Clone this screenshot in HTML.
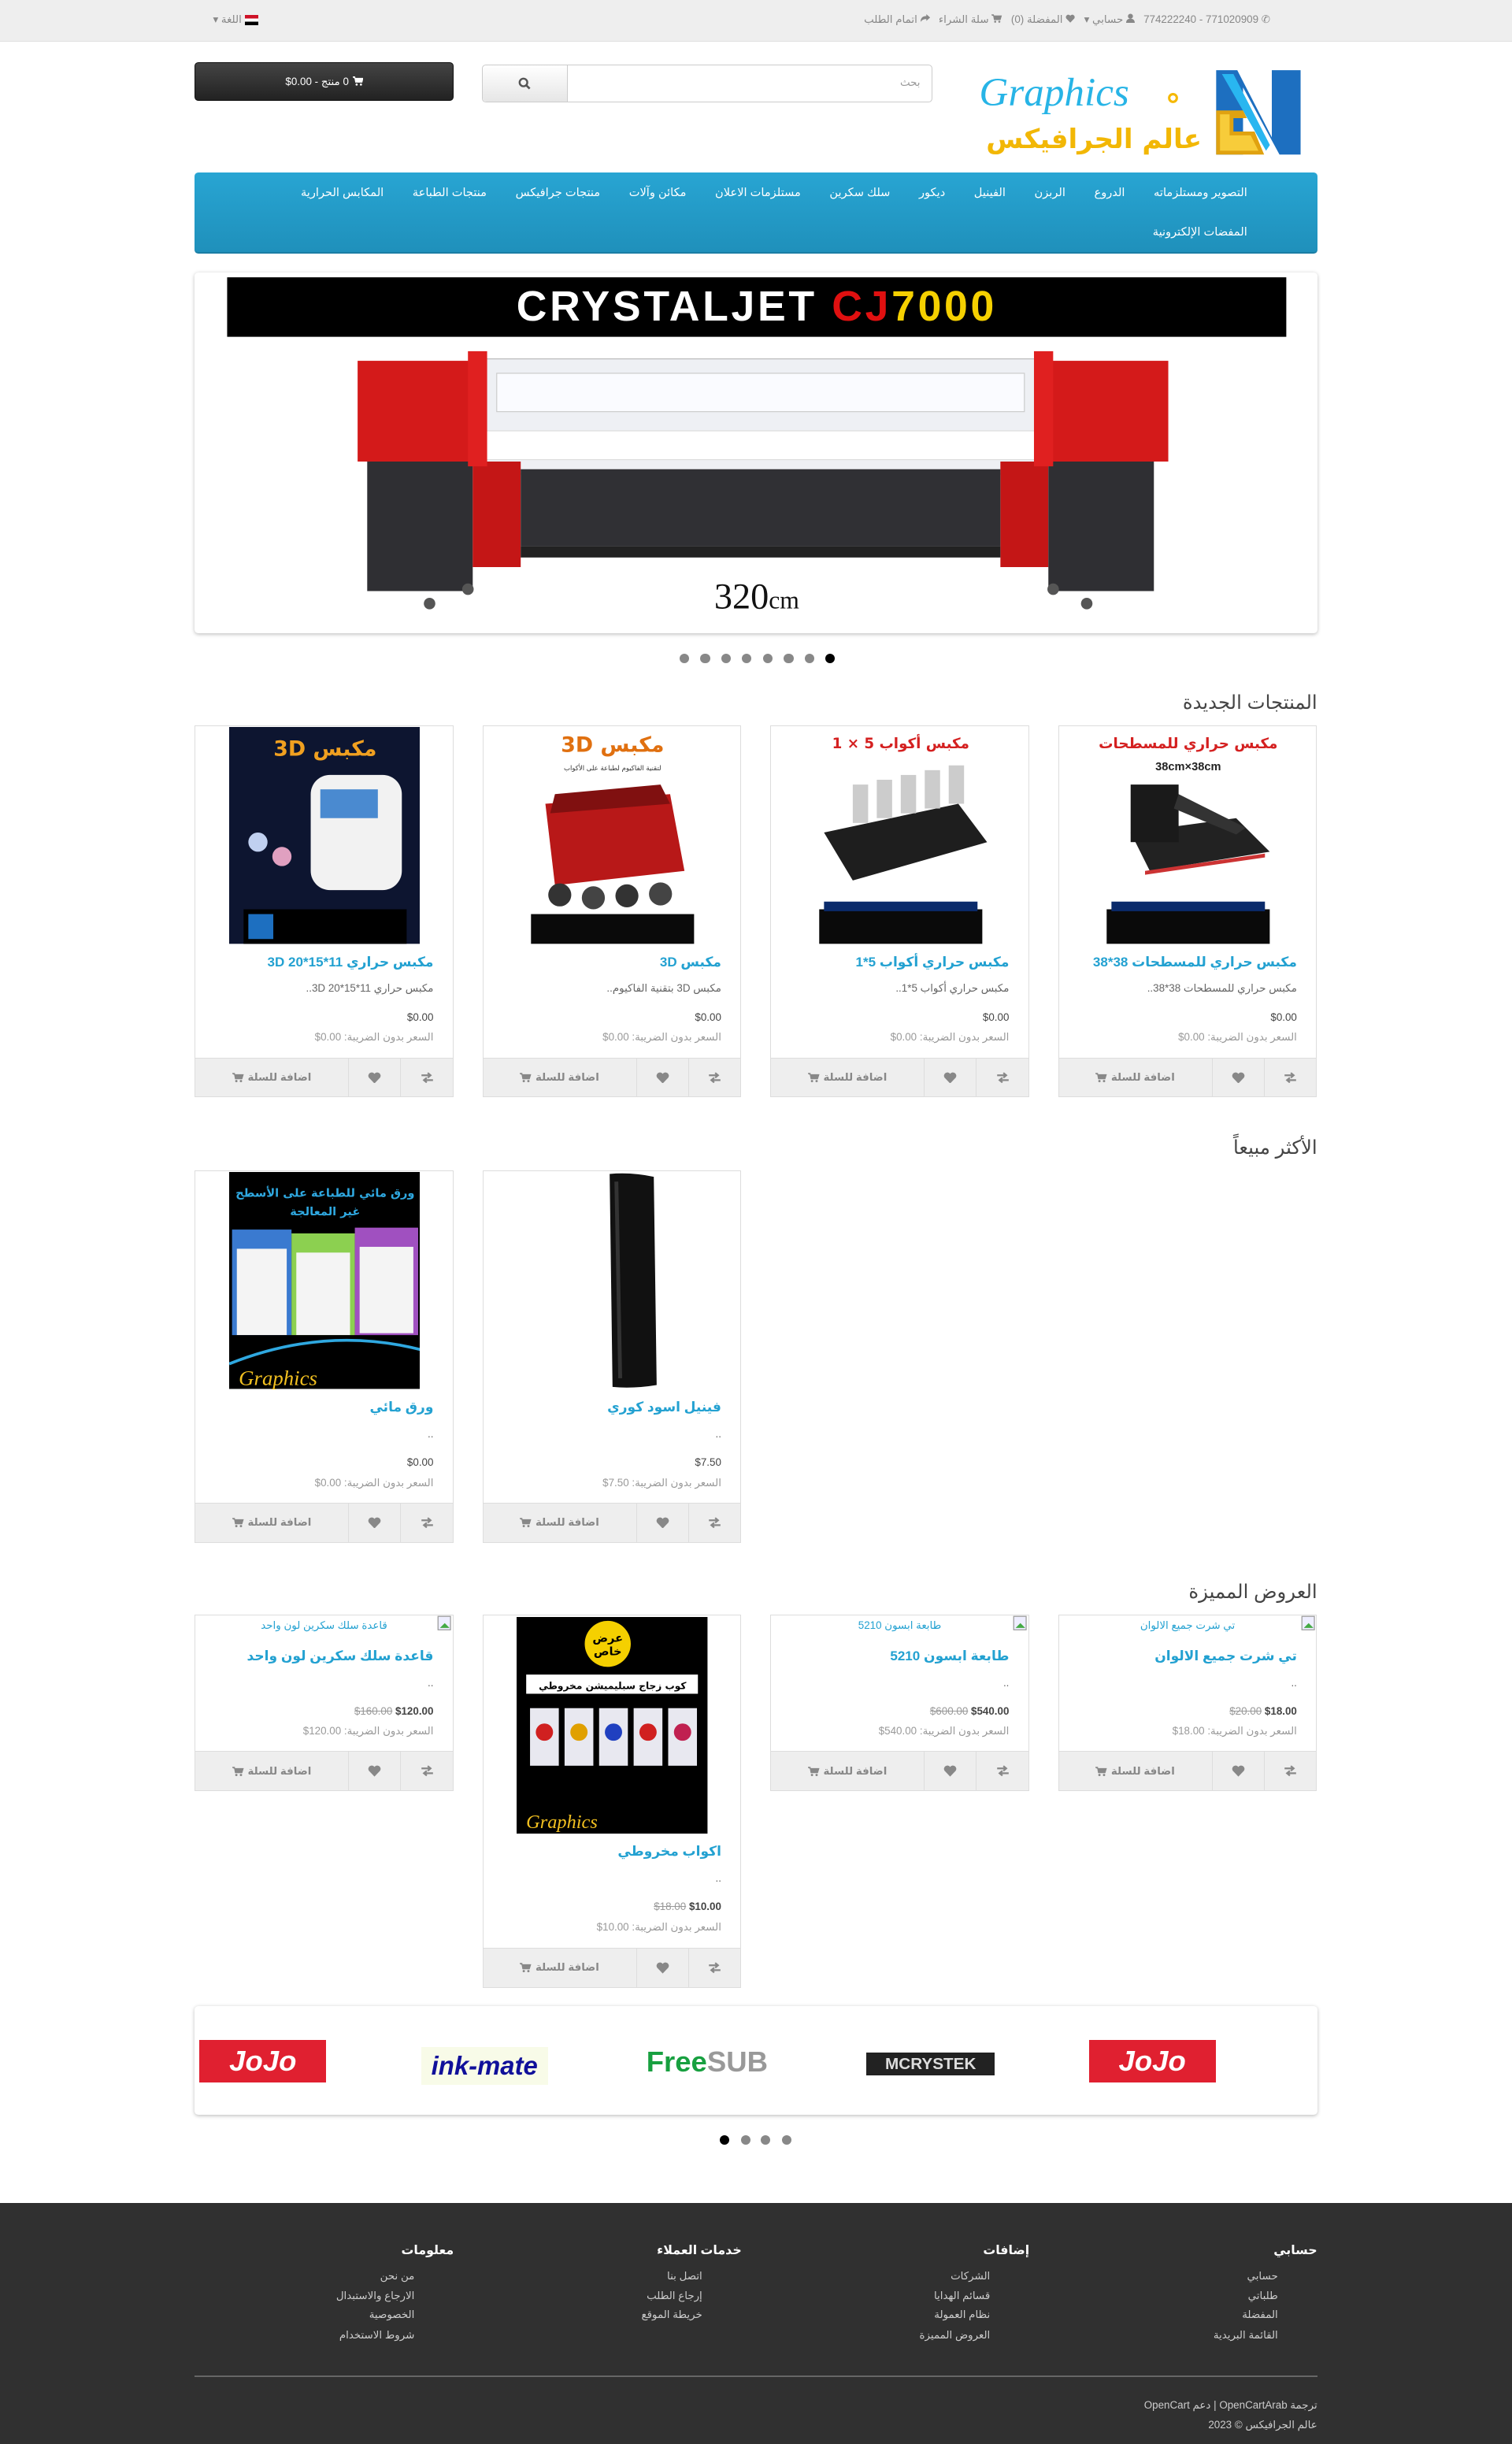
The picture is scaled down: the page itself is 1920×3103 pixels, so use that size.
<!DOCTYPE html>
<html lang="ar" dir="rtl">
<head>
<meta charset="utf-8">
<style>
html,body{margin:0;padding:0;background:#fff}
body{zoom:1.21827;width:1576px;height:2547px;position:relative;overflow:hidden;font-family:"Liberation Sans","DejaVu Sans",sans-serif;font-size:12px;color:#666}
svg{direction:ltr}
.a{position:absolute}
#top{left:0;top:0;width:1576px;height:43px;background:#eee;border-bottom:1px solid #e2e2e2}
.tl{top:14px;font-size:11px;color:#888;white-space:nowrap}
#menu{left:203px;top:180px;width:1170px;height:83px;border-radius:4px;background:linear-gradient(#28a5d3,#1f90bb);border-bottom:2px solid #1a7da4}
.mi{color:#fff;font-size:12px;white-space:nowrap}
#slide{left:203px;top:284px;width:1170px;height:376px;background:#fff;border-radius:4px;box-shadow:0 1px 4px rgba(0,0,0,.25)}
h3{position:absolute;margin:0;font-size:20px;font-weight:normal;color:#444;right:203px}
.card{position:absolute;width:268px;border:1px solid #ddd;background:#fff;overflow:hidden}
.card .im{position:absolute;left:35px;top:1px;width:199px;height:226px}
.card .t{position:absolute;right:20px;font-size:14px;font-weight:bold;color:#23a1d1;white-space:nowrap}
.card .d{position:absolute;right:20px;font-size:11px;color:#666;white-space:nowrap}
.card .p{position:absolute;right:20px;font-size:11px;color:#444;white-space:nowrap}
.card .p s{color:#999;font-weight:normal}
.card .x{position:absolute;right:20px;font-size:11px;color:#999;white-space:nowrap}
.card .alt{position:absolute;left:0;right:0;top:4px;font-size:11px;color:#23a1d1;text-align:center}
.card .br{position:absolute;right:0;top:0;width:16px;height:16px}
.bg{position:absolute;left:0;bottom:0;width:268px;height:40px;background:#eee;border-top:1px solid #ddd;direction:ltr;display:flex}
.bg div{height:40px;display:flex;align-items:center;justify-content:center;color:#888;font-size:11px;font-weight:bold;gap:4px}
.bg .c{width:160px;border-right:1px solid #ddd}
.bg .h{width:54px;border-right:1px solid #ddd}
.bg .s{width:54px}
.dot{position:absolute;width:10px;height:10px;border-radius:5px;background:#888}
#foot{left:0;top:2296px;width:1576px;height:251px;background:#303030}
.fh{position:absolute;color:#fff;font-size:13px;font-weight:bold;white-space:nowrap}
.fl{position:absolute;color:#ccc;font-size:11px;white-space:nowrap}
</style>
</head>
<body>
<svg width="0" height="0" style="position:absolute">
  <defs>
    <symbol id="cart" viewBox="0 0 12 10"><path d="M0 0.7H2.2L3.2 6.3H10L11.3 2H2.6Z" fill="#888" stroke="#888" stroke-width="1"/><circle cx="4.2" cy="8.7" r="1.2" fill="#888"/><circle cx="9" cy="8.7" r="1.2" fill="#888"/></symbol>
    <symbol id="heart" viewBox="0 0 14 12"><path d="M7 12 L1.2 6 A3.3 3.3 0 0 1 7 2 A3.3 3.3 0 0 1 12.8 6Z" fill="#888"/></symbol>
    <symbol id="cmp" viewBox="0 0 14 12"><path d="M1 3.5H10M7.5 1L10.5 3.5L7.5 6M13 8.5H4M6.5 6L3.5 8.5L6.5 11" stroke="#888" stroke-width="1.8" fill="none"/></symbol>
  </defs>
</svg>
<div id="top" class="a">
  <div class="a tl" style="left:222px;direction:ltr">▾ <span>اللغة</span> <span style="display:inline-block;width:14px;height:10px;vertical-align:middle;background:linear-gradient(#ce1126 33%,#fff 33%,#fff 66%,#000 66%)"></span></div>
  <div class="a tl" style="right:252px">
    <span>&#9990; 771020909 - 774222240</span>&nbsp;&nbsp;
    <span><svg width="9" height="10" viewBox="0 0 9 10"><circle cx="4.5" cy="3" r="2.6" fill="#888"/><path d="M0 10 Q0 5.5 4.5 5.5 Q9 5.5 9 10Z" fill="#888"/></svg> حسابي ▾</span>&nbsp;&nbsp;
    <span><svg width="10" height="9"><use href="#heart"/></svg> المفضلة (0)</span>&nbsp;&nbsp;
    <span><svg width="11" height="9"><use href="#cart"/></svg> سلة الشراء</span>&nbsp;&nbsp;
    <span><svg width="10" height="9" viewBox="0 0 10 9"><path d="M10 3.5 L6 0 V2 Q0 2 0 8 Q2 5 6 5 V7Z" fill="#888"/></svg> اتمام الطلب</span>
  </div>
</div>

<svg class="a" style="left:1019px;top:68px" width="340" height="96" viewBox="0 0 340 96">
  <text x="2" y="42" font-family="Liberation Serif,serif" font-style="italic" font-size="42" fill="#27b4e6">Graphics</text>
  <circle cx="204" cy="34" r="4" fill="none" stroke="#f5b800" stroke-width="2.5"/>
  <text x="234" y="86" text-anchor="start" direction="rtl" font-family="DejaVu Sans" font-weight="bold" font-size="28" fill="#f2b705">عالم الجرافيكس</text>
  <g transform="translate(249,5)">
    <polygon points="0,0 22,0 58,70 58,0 88,0 88,88 66,88 28,18 28,88 0,88" fill="#1d6fc0"/>
    <polygon points="6,4 18,4 56,78 52,84" fill="#29b6f0"/>
    <polygon points="0,42 0,88 50,88 40,64 18,64 18,50 32,50 28,42" fill="#e0a210"/>
    <polygon points="4,46 4,84 44,84 36,68 14,68 14,46" fill="#f7cc3a"/>
  </g>
</svg>

<div class="a" style="left:502px;top:67px;width:470px;height:40px;border:1px solid #ccc;border-radius:4px;box-sizing:border-box;background:#fff">
  <div class="a" style="right:12px;top:12px;font-size:11px;color:#999">بحث</div>
  <div class="a" style="left:0;top:0;width:88px;height:38px;background:linear-gradient(#fff,#e6e6e6);border-right:1px solid #ccc;border-radius:4px 0 0 4px;display:flex;align-items:center;justify-content:center">
    <svg width="13" height="13" viewBox="0 0 13 13"><circle cx="5.5" cy="5.5" r="4" stroke="#555" stroke-width="2" fill="none"/><path d="M8.5 8.5L12 12" stroke="#555" stroke-width="2.2"/></svg>
  </div>
</div>
<div class="a" style="left:203px;top:65px;width:270px;height:40px;border-radius:4px;background:linear-gradient(#444,#222);border:1px solid #111;box-sizing:border-box;color:#fff;font-size:11px;display:flex;align-items:center;justify-content:center">
  <svg width="11" height="10" viewBox="0 0 11 10" style="margin-left:4px"><path d="M0 0.5H2L3 6H9.5L10.5 2H2.5Z" fill="#fff" stroke="#fff"/><circle cx="4" cy="8.5" r="1.1" fill="#fff"/><circle cx="8.5" cy="8.5" r="1.1" fill="#fff"/></svg>
  <span>0 منتج - 0.00$</span>
</div>

<div id="menu" class="a">
  <div class="a mi" style="right:73px;top:14px;display:flex;gap:30px">
    <span>التصوير ومستلزماته</span><span>الدروع</span><span>الربزن</span><span>الفينيل</span><span>ديكور</span><span>سلك سكرين</span><span>مستلزمات الاعلان</span><span>مكائن وآلات</span><span>منتجات جرافيكس</span><span>منتجات الطباعة</span><span>المكابس الحرارية</span>
  </div>
  <div class="a mi" style="right:73px;top:55px">المفضات الإلكترونية</div>
</div>

<div id="slide" class="a">
  <svg class="a" style="left:0;top:0" width="1170" height="376" viewBox="0 0 1170 376">
    <rect x="34" y="5" width="1104" height="62" fill="#000"/>
    <text x="586" y="50" text-anchor="middle" font-family="Liberation Sans" font-weight="bold" font-size="44" letter-spacing="3"><tspan fill="#fff">CRYSTALJET </tspan><tspan fill="#e01010">CJ</tspan><tspan fill="#f5d000">7000</tspan></text>
    <rect x="300" y="90" width="580" height="120" fill="#eef0f4" stroke="#bbb"/>
    <rect x="315" y="105" width="550" height="40" fill="#fafbff" stroke="#ccc"/>
    <rect x="300" y="165" width="580" height="30" fill="#fff" stroke="#ddd"/>
    <rect x="170" y="92" width="130" height="105" fill="#d41a1a"/>
    <rect x="885" y="92" width="130" height="105" fill="#d41a1a"/>
    <rect x="180" y="197" width="110" height="135" fill="#2f2f33"/>
    <rect x="290" y="197" width="50" height="110" fill="#c41616"/>
    <rect x="840" y="197" width="50" height="110" fill="#c41616"/>
    <rect x="890" y="197" width="110" height="135" fill="#2f2f33"/>
    <rect x="340" y="205" width="500" height="80" fill="#303034"/>
    <rect x="340" y="285" width="500" height="12" fill="#222"/>
    <rect x="285" y="82" width="20" height="120" fill="#e02020"/>
    <rect x="875" y="82" width="20" height="120" fill="#e02020"/>
    <circle cx="245" cy="345" r="6" fill="#555"/><circle cx="285" cy="330" r="6" fill="#555"/>
    <circle cx="930" cy="345" r="6" fill="#555"/><circle cx="895" cy="330" r="6" fill="#555"/>
    <text x="586" y="350" text-anchor="middle" font-family="Liberation Serif,serif" font-size="38" fill="#111">320<tspan font-size="26">cm</tspan></text>
  </svg>
</div>
<div class="dot" style="left:708px;top:681px"></div><div class="dot" style="left:730px;top:681px"></div><div class="dot" style="left:752px;top:681px"></div><div class="dot" style="left:773px;top:681px"></div><div class="dot" style="left:795px;top:681px"></div><div class="dot" style="left:817px;top:681px"></div><div class="dot" style="left:839px;top:681px"></div><div class="dot" style="left:860px;top:681px;background:#000"></div>

<h3 style="top:720px">المنتجات الجديدة</h3>

<div class="card" style="left:1103px;top:756px;height:386px">
  <svg class="im" viewBox="0 0 199 226"><rect width="199" height="226" fill="#fff"/>
    <text x="100" y="22" text-anchor="middle" direction="rtl" font-size="15" font-weight="bold" fill="#d42020" font-family="DejaVu Sans">مكبس حراري للمسطحات</text>
    <text x="100" y="45" text-anchor="middle" font-size="12" font-weight="bold" fill="#222">38cm×38cm</text>
    <polygon points="40,110 150,95 185,130 60,150" fill="#222"/><rect x="40" y="60" width="50" height="60" fill="#1a1a1a"/><polygon points="90,70 160,105 150,112 85,85" fill="#333"/>
    <polygon points="55,150 180,132 180,136 55,154" fill="#c33"/>
    <rect x="15" y="190" width="170" height="36" fill="#0a0a0a"/><rect x="20" y="182" width="160" height="10" fill="#0b2b6b"/>
  </svg>
  <div class="t" style="top:238px">مكبس حراري للمسطحات 38*38</div>
  <div class="d" style="top:267px">مكبس حراري للمسطحات 38*38..</div>
  <div class="p" style="top:297px">$0.00</div>
  <div class="x" style="top:318px">السعر بدون الضريبة: 0.00$</div>
  <div class="bg"><div class="c"><svg width="12" height="10"><use href="#cart"/></svg>اضافة للسلة</div><div class="h"><svg width="14" height="12"><use href="#heart"/></svg></div><div class="s"><svg width="14" height="12"><use href="#cmp"/></svg></div></div>
</div>
<div class="card" style="left:803px;top:756px;height:386px">
  <svg class="im" viewBox="0 0 199 226"><rect width="199" height="226" fill="#fff"/>
    <text x="100" y="22" text-anchor="middle" direction="rtl" font-size="15" font-weight="bold" fill="#d42020" font-family="DejaVu Sans">مكبس أكواب 5 × 1</text>
    <polygon points="20,110 160,80 190,120 50,160" fill="#1e1e1e"/>
    <rect x="50" y="60" width="16" height="40" fill="#ccc"/><rect x="75" y="55" width="16" height="40" fill="#ccc"/><rect x="100" y="50" width="16" height="40" fill="#ccc"/><rect x="125" y="45" width="16" height="40" fill="#ccc"/><rect x="150" y="40" width="16" height="40" fill="#ccc"/>
    <rect x="15" y="190" width="170" height="36" fill="#0a0a0a"/><rect x="20" y="182" width="160" height="10" fill="#0b2b6b"/>
  </svg>
  <div class="t" style="top:238px">مكبس حراري أكواب 5*1</div>
  <div class="d" style="top:267px">مكبس حراري أكواب 5*1..</div>
  <div class="p" style="top:297px">$0.00</div>
  <div class="x" style="top:318px">السعر بدون الضريبة: 0.00$</div>
  <div class="bg"><div class="c"><svg width="12" height="10"><use href="#cart"/></svg>اضافة للسلة</div><div class="h"><svg width="14" height="12"><use href="#heart"/></svg></div><div class="s"><svg width="14" height="12"><use href="#cmp"/></svg></div></div>
</div>
<div class="card" style="left:503px;top:756px;height:386px">
  <svg class="im" viewBox="0 0 199 226"><rect width="199" height="226" fill="#fff"/>
    <text x="100" y="26" text-anchor="middle" direction="rtl" font-size="22" font-weight="bold" fill="#e07010" font-family="DejaVu Sans">مكبس 3D</text>
    <text x="100" y="45" text-anchor="middle" direction="rtl" font-size="7" fill="#333" font-family="DejaVu Sans">لتقنية الفاكيوم لطباعة على الأكواب</text>
    <polygon points="30,80 160,70 175,150 40,165" fill="#b81818"/><polygon points="40,70 150,60 160,80 35,90" fill="#801010"/>
    <circle cx="45" cy="175" r="12" fill="#333"/><circle cx="80" cy="178" r="12" fill="#444"/><circle cx="115" cy="176" r="12" fill="#333"/><circle cx="150" cy="174" r="12" fill="#444"/>
    <rect x="15" y="195" width="170" height="31" fill="#0a0a0a"/>
  </svg>
  <div class="t" style="top:238px">مكبس 3D</div>
  <div class="d" style="top:267px">مكبس 3D بتقنية الفاكيوم..</div>
  <div class="p" style="top:297px">$0.00</div>
  <div class="x" style="top:318px">السعر بدون الضريبة: 0.00$</div>
  <div class="bg"><div class="c"><svg width="12" height="10"><use href="#cart"/></svg>اضافة للسلة</div><div class="h"><svg width="14" height="12"><use href="#heart"/></svg></div><div class="s"><svg width="14" height="12"><use href="#cmp"/></svg></div></div>
</div>
<div class="card" style="left:203px;top:756px;height:386px">
  <svg class="im" viewBox="0 0 199 226"><rect width="199" height="226" fill="#0d1530"/>
    <text x="100" y="30" text-anchor="middle" direction="rtl" font-size="22" font-weight="bold" fill="#f0a020" font-family="DejaVu Sans">مكبس 3D</text>
    <rect x="85" y="50" width="95" height="120" rx="20" fill="#f2f2f2"/><rect x="95" y="65" width="60" height="30" fill="#4a8ad0"/>
    <circle cx="30" cy="120" r="10" fill="#c0d0f0"/><circle cx="55" cy="135" r="10" fill="#e0a0c0"/>
    <rect x="15" y="190" width="170" height="36" fill="#000"/><rect x="20" y="195" width="26" height="26" fill="#1d6fc0"/>
  </svg>
  <div class="t" style="top:238px">مكبس حراري 11*15*20 3D</div>
  <div class="d" style="top:267px">مكبس حراري 11*15*20 3D..</div>
  <div class="p" style="top:297px">$0.00</div>
  <div class="x" style="top:318px">السعر بدون الضريبة: 0.00$</div>
  <div class="bg"><div class="c"><svg width="12" height="10"><use href="#cart"/></svg>اضافة للسلة</div><div class="h"><svg width="14" height="12"><use href="#heart"/></svg></div><div class="s"><svg width="14" height="12"><use href="#cmp"/></svg></div></div>
</div>

<h3 style="top:1184px">الأكثر مبيعاً</h3>

<div class="card" style="left:503px;top:1220px;height:386px">
  <svg class="im" viewBox="0 0 199 226"><rect width="199" height="226" fill="#fff"/>
    <path d="M97 2 Q120 0 143 5 L146 222 Q122 226 100 224 Z" fill="#111"/><path d="M104 10 L108 215" stroke="#333" stroke-width="4"/>
  </svg>
  <div class="t" style="top:238px">فينيل اسود كوري</div>
  <div class="d" style="top:267px">..</div>
  <div class="p" style="top:297px">$7.50</div>
  <div class="x" style="top:318px">السعر بدون الضريبة: 7.50$</div>
  <div class="bg"><div class="c"><svg width="12" height="10"><use href="#cart"/></svg>اضافة للسلة</div><div class="h"><svg width="14" height="12"><use href="#heart"/></svg></div><div class="s"><svg width="14" height="12"><use href="#cmp"/></svg></div></div>
</div>
<div class="card" style="left:203px;top:1220px;height:386px">
  <svg class="im" viewBox="0 0 199 226"><rect width="199" height="226" fill="#000"/>
    <text x="100" y="26" text-anchor="middle" direction="rtl" font-size="12" font-weight="bold" fill="#2fa8e0" font-family="DejaVu Sans">ورق مائي للطباعة على الأسطح</text>
    <text x="100" y="45" text-anchor="middle" direction="rtl" font-size="12" font-weight="bold" fill="#2fa8e0" font-family="DejaVu Sans">غير المعالجة</text>
    <rect x="3" y="60" width="62" height="150" fill="#3a7ad0"/><rect x="65" y="64" width="66" height="140" fill="#8cd050"/><rect x="131" y="58" width="66" height="150" fill="#a050c0"/>
    <rect x="8" y="80" width="52" height="90" fill="#f4f4f4"/><rect x="70" y="84" width="56" height="86" fill="#f4f4f4"/><rect x="136" y="78" width="56" height="90" fill="#f4f4f4"/>
    <rect x="0" y="170" width="199" height="56" fill="#000"/>
    <path d="M0 200 Q100 160 199 185" stroke="#2fa8e0" stroke-width="3" fill="none"/>
    <text x="10" y="222" font-family="Liberation Serif" font-style="italic" font-size="22" fill="#f2c020">Graphics</text>
  </svg>
  <div class="t" style="top:238px">ورق مائي</div>
  <div class="d" style="top:267px">..</div>
  <div class="p" style="top:297px">$0.00</div>
  <div class="x" style="top:318px">السعر بدون الضريبة: 0.00$</div>
  <div class="bg"><div class="c"><svg width="12" height="10"><use href="#cart"/></svg>اضافة للسلة</div><div class="h"><svg width="14" height="12"><use href="#heart"/></svg></div><div class="s"><svg width="14" height="12"><use href="#cmp"/></svg></div></div>
</div>

<h3 style="top:1647px">العروض المميزة</h3>

<div class="card" style="left:1103px;top:1683px;height:182px">
  <svg class="br" viewBox="0 0 16 16"><rect x="1" y="1" width="13" height="14" fill="#eef" stroke="#999"/><path d="M3 13 L8 8 L13 13Z" fill="#4a4"/></svg>
  <div class="alt">تي شرت جميع الالوان</div>
  <div class="t" style="top:34px">تي شرت جميع الالوان</div>
  <div class="d" style="top:64px">..</div>
  <div class="p" style="top:93px"><b>$18.00</b> <s>$20.00</s></div>
  <div class="x" style="top:114px">السعر بدون الضريبة: 18.00$</div>
  <div class="bg"><div class="c"><svg width="12" height="10"><use href="#cart"/></svg>اضافة للسلة</div><div class="h"><svg width="14" height="12"><use href="#heart"/></svg></div><div class="s"><svg width="14" height="12"><use href="#cmp"/></svg></div></div>
</div>
<div class="card" style="left:803px;top:1683px;height:182px">
  <svg class="br" viewBox="0 0 16 16"><rect x="1" y="1" width="13" height="14" fill="#eef" stroke="#999"/><path d="M3 13 L8 8 L13 13Z" fill="#4a4"/></svg>
  <div class="alt">طابعة ابسون 5210</div>
  <div class="t" style="top:34px">طابعة ابسون 5210</div>
  <div class="d" style="top:64px">..</div>
  <div class="p" style="top:93px"><b>$540.00</b> <s>$600.00</s></div>
  <div class="x" style="top:114px">السعر بدون الضريبة: 540.00$</div>
  <div class="bg"><div class="c"><svg width="12" height="10"><use href="#cart"/></svg>اضافة للسلة</div><div class="h"><svg width="14" height="12"><use href="#heart"/></svg></div><div class="s"><svg width="14" height="12"><use href="#cmp"/></svg></div></div>
</div>
<div class="card" style="left:503px;top:1683px;height:387px">
  <svg class="im" viewBox="0 0 199 226"><rect width="199" height="226" fill="#000"/>
    <circle cx="95" cy="28" r="24" fill="#f5d000"/><text x="95" y="26" text-anchor="middle" direction="rtl" font-size="12" font-weight="bold" fill="#000" font-family="DejaVu Sans">عرض</text><text x="95" y="40" text-anchor="middle" direction="rtl" font-size="12" font-weight="bold" fill="#000" font-family="DejaVu Sans">خاص</text>
    <rect x="10" y="60" width="179" height="20" fill="#fff"/><text x="100" y="75" text-anchor="middle" direction="rtl" font-size="10" font-weight="bold" fill="#000" font-family="DejaVu Sans">كوب زجاج سبليميشن مخروطي</text>
    <rect x="14" y="95" width="30" height="60" fill="#e8e8f0"/><rect x="50" y="95" width="30" height="60" fill="#e8e8f0"/><rect x="86" y="95" width="30" height="60" fill="#e8e8f0"/><rect x="122" y="95" width="30" height="60" fill="#e8e8f0"/><rect x="158" y="95" width="30" height="60" fill="#e8e8f0"/>
    <circle cx="29" cy="120" r="9" fill="#d02020"/><circle cx="65" cy="120" r="9" fill="#e0a000"/><circle cx="101" cy="120" r="9" fill="#2040c0"/><circle cx="137" cy="120" r="9" fill="#d02020"/><circle cx="173" cy="120" r="9" fill="#c02050"/>
    <text x="10" y="220" font-family="Liberation Serif" font-style="italic" font-size="20" fill="#f2c020">Graphics</text>
  </svg>
  <div class="t" style="top:238px">اكواب مخروطي</div>
  <div class="d" style="top:267px">..</div>
  <div class="p" style="top:297px"><b>$10.00</b> <s>$18.00</s></div>
  <div class="x" style="top:318px">السعر بدون الضريبة: 10.00$</div>
  <div class="bg"><div class="c"><svg width="12" height="10"><use href="#cart"/></svg>اضافة للسلة</div><div class="h"><svg width="14" height="12"><use href="#heart"/></svg></div><div class="s"><svg width="14" height="12"><use href="#cmp"/></svg></div></div>
</div>
<div class="card" style="left:203px;top:1683px;height:182px">
  <svg class="br" viewBox="0 0 16 16"><rect x="1" y="1" width="13" height="14" fill="#eef" stroke="#999"/><path d="M3 13 L8 8 L13 13Z" fill="#4a4"/></svg>
  <div class="alt">قاعدة سلك سكرين لون واحد</div>
  <div class="t" style="top:34px">قاعدة سلك سكرين لون واحد</div>
  <div class="d" style="top:64px">..</div>
  <div class="p" style="top:93px"><b>$120.00</b> <s>$160.00</s></div>
  <div class="x" style="top:114px">السعر بدون الضريبة: 120.00$</div>
  <div class="bg"><div class="c"><svg width="12" height="10"><use href="#cart"/></svg>اضافة للسلة</div><div class="h"><svg width="14" height="12"><use href="#heart"/></svg></div><div class="s"><svg width="14" height="12"><use href="#cmp"/></svg></div></div>
</div>

<div class="a" style="left:203px;top:2091px;width:1170px;height:113px;background:#fff;border-radius:4px;box-shadow:0 1px 4px rgba(0,0,0,.25)">
  <div class="a" style="left:5px;top:35px;width:132px;height:44px;background:#e02030;color:#fff;font-weight:bold;font-size:30px;line-height:44px;text-align:center;font-style:italic">JoJo</div>
  <div class="a" style="left:236px;top:42px;width:132px;height:40px;background:#f8fbe8;color:#10109a;font-weight:bold;font-size:27px;line-height:40px;text-align:center;font-style:italic;direction:ltr">ink-mate</div>
  <div class="a" style="left:468px;top:36px;width:132px;height:44px;font-weight:bold;font-size:30px;line-height:44px;text-align:center;direction:ltr"><span style="color:#18a040">Free</span><span style="color:#999">SUB</span></div>
  <div class="a" style="left:700px;top:48px;width:134px;height:24px;background:#222;color:#ddd;font-weight:bold;font-size:17px;line-height:24px;text-align:center;direction:ltr">MCRYSTEK</div>
  <div class="a" style="left:932px;top:35px;width:132px;height:44px;background:#e02030;color:#fff;font-weight:bold;font-size:30px;line-height:44px;text-align:center;font-style:italic">JoJo</div>
</div>
<div class="dot" style="left:750px;top:2225px;background:#000"></div><div class="dot" style="left:772px;top:2225px"></div><div class="dot" style="left:793px;top:2225px"></div><div class="dot" style="left:815px;top:2225px"></div>

<div id="foot" class="a">
  <div class="fh" style="right:203px;top:41px">حسابي</div>
  <div class="fl" style="right:244px;top:70px">حسابي</div>
  <div class="fl" style="right:244px;top:90px">طلباتي</div>
  <div class="fl" style="right:244px;top:110px">المفضلة</div>
  <div class="fl" style="right:244px;top:131px">القائمة البريدية</div>

  <div class="fh" style="right:503px;top:41px">إضافات</div>
  <div class="fl" style="right:544px;top:70px">الشركات</div>
  <div class="fl" style="right:544px;top:90px">قسائم الهدايا</div>
  <div class="fl" style="right:544px;top:110px">نظام العمولة</div>
  <div class="fl" style="right:544px;top:131px">العروض المميزة</div>

  <div class="fh" style="right:803px;top:41px">خدمات العملاء</div>
  <div class="fl" style="right:844px;top:70px">اتصل بنا</div>
  <div class="fl" style="right:844px;top:90px">إرجاع الطلب</div>
  <div class="fl" style="right:844px;top:110px">خريطة الموقع</div>

  <div class="fh" style="right:1103px;top:41px">معلومات</div>
  <div class="fl" style="right:1144px;top:70px">من نحن</div>
  <div class="fl" style="right:1144px;top:90px">الارجاع والاستبدال</div>
  <div class="fl" style="right:1144px;top:110px">الخصوصية</div>
  <div class="fl" style="right:1144px;top:131px">شروط الاستخدام</div>

  <div class="a" style="left:203px;top:180px;width:1170px;height:1px;background:#666"></div>
  <div class="fl" style="right:203px;top:204px">ترجمة OpenCartArab | دعم OpenCart</div>
  <div class="fl" style="right:203px;top:225px">عالم الجرافيكس © 2023</div>
</div>
</body>
</html>
